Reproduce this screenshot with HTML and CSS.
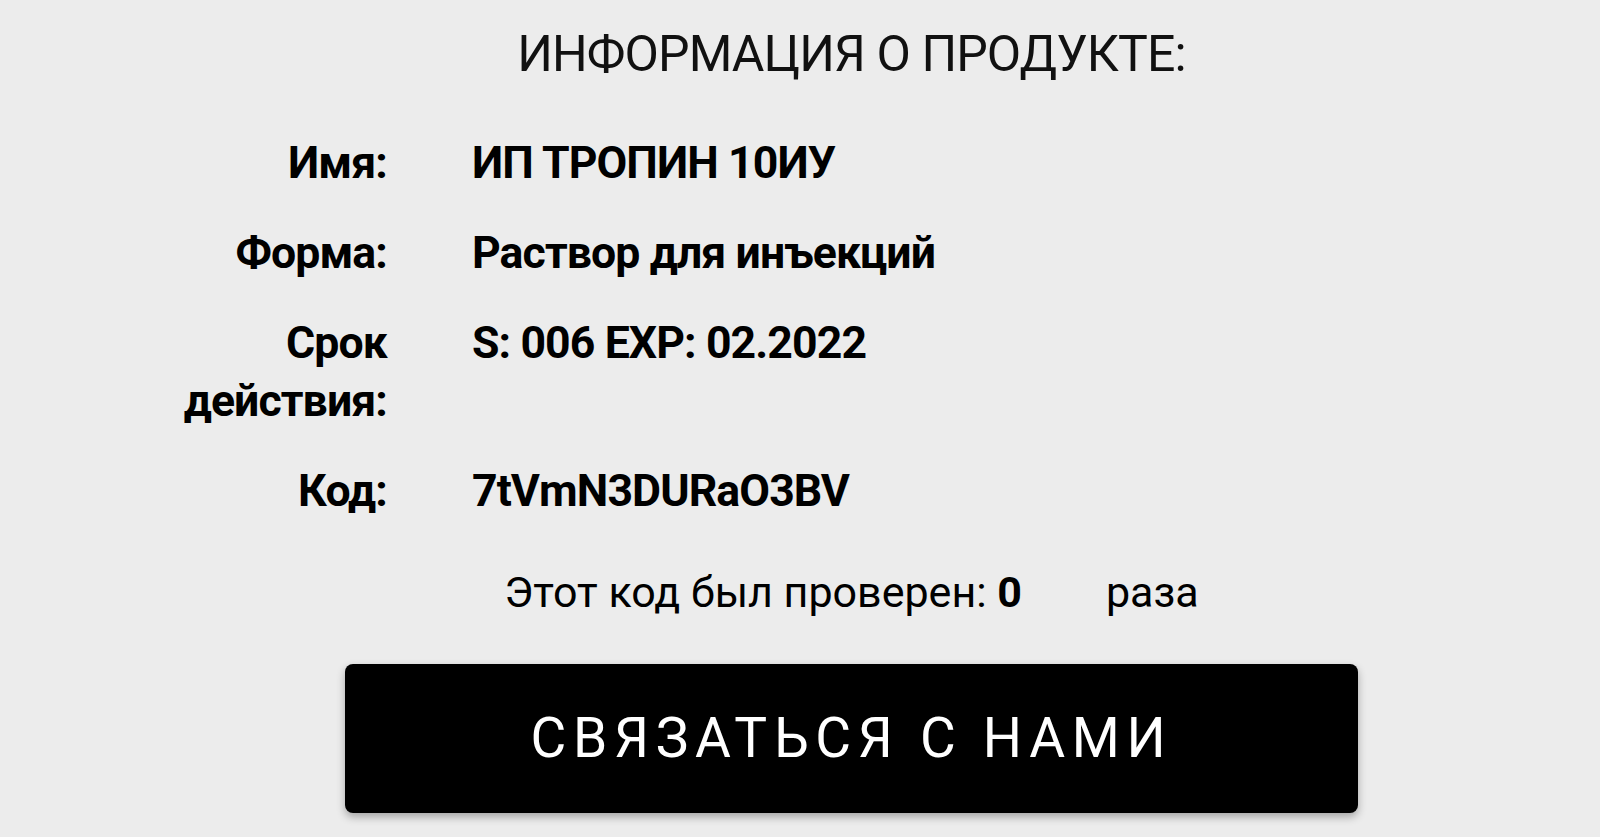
FILE: index.html
```html
<!DOCTYPE html>
<html lang="ru">
<head>
<meta charset="utf-8">
<title>Информация о продукте</title>
<link rel="stylesheet" href="styles.css">
</head>
<body>
<main class="page">
  <h1 class="title">ИНФОРМАЦИЯ О ПРОДУКТЕ:</h1>
  <dl class="info">
    <dt class="label">Имя:</dt>
    <dd class="value">ИП ТРОПИН 10ИУ</dd>
    <dt class="label">Форма:</dt>
    <dd class="value">Раствор для инъекций</dd>
    <dt class="label">Срок действия:</dt>
    <dd class="value">S: 006 EXP: 02.2022</dd>
    <dt class="label">Код:</dt>
    <dd class="value">7tVmN3DURaO3BV</dd>
  </dl>
  <p class="checked">Этот код был проверен: <b class="count">0</b><span class="times">раза</span></p>
  <div class="actions">
    <button class="contact" type="button">СВЯЗАТЬСЯ С НАМИ</button>
  </div>
</main>
</body>
</html>
```
FILE: styles.css
```css
html, body {
  margin: 0;
  padding: 0;
  background: #ececec;
}
body {
  font-family: Roboto, "Noto Sans", "Liberation Sans", sans-serif;
  color: #000;
  height: 837px;
  overflow: hidden;
}
.page {
  padding-left: 103px;
  padding-top: 23px;
}
.title {
  margin: 0;
  font-size: 50px;
  line-height: 63px;
  font-weight: 400;
  letter-spacing: -0.9px;
  text-align: center;
  color: #111;
}
.info {
  display: grid;
  grid-template-columns: 215px 1fr;
  column-gap: 85px;
  row-gap: 32px;
  margin: 48px 0 0 0;
  padding-left: 69px;
  font-size: 44.6px;
  line-height: 58px;
  font-weight: 700;
  letter-spacing: -0.9px;
}
.label {
  margin: 0;
  text-align: right;
}
.value {
  margin: 0;
}
.checked {
  margin: 43px 0 0 0;
  text-align: center;
  font-size: 43px;
  line-height: 58px;
}
.count {
  font-weight: 700;
  margin-right: 84px;
}
.actions {
  display: flex;
  justify-content: center;
  margin-top: 43px;
}
.contact {
  width: 1013px;
  height: 149px;
  display: flex;
  align-items: center;
  justify-content: center;
  border: none;
  border-radius: 8px;
  background: #000;
  color: #fff;
  font-family: Roboto, "Noto Sans", "Liberation Sans", sans-serif;
  font-size: 55px;
  line-height: 55px;
  font-weight: 400;
  letter-spacing: 6.7px;
  padding: 0;
  box-shadow: 0 4px 8px rgba(0, 0, 0, 0.3);
}
```
